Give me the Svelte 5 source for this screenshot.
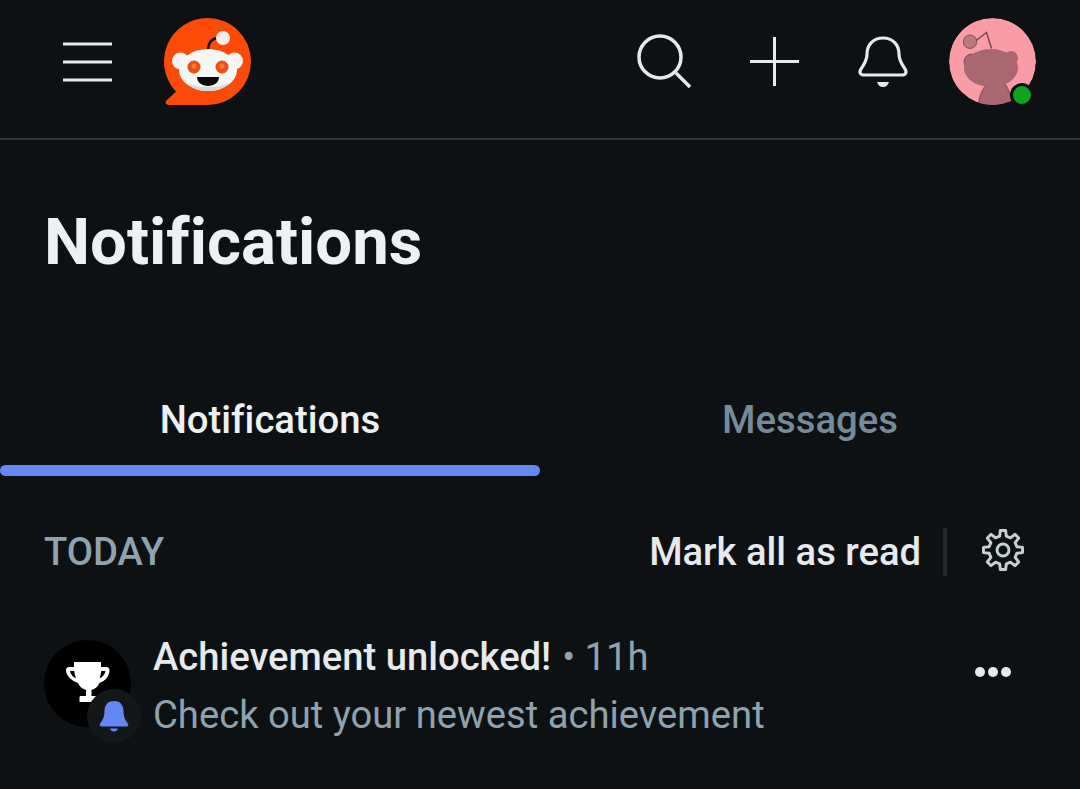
<script lang="ts">
  // 8-tooth gear outline, centred on 24,24
  function gearPath(teeth: number, outer: number, inner: number): string {
    const pts: string[] = [];
    const step = (Math.PI * 2) / teeth;
    for (let i = 0; i < teeth; i++) {
      const a = i * step - Math.PI / 2;
      const at = (r: number, d: number) =>
        `${(24 + r * Math.cos(a + d * step)).toFixed(2)} ${(24 + r * Math.sin(a + d * step)).toFixed(2)}`;
      pts.push(`${i === 0 ? 'M' : 'L'}${at(inner, -0.3)}`, `L${at(outer, -0.17)}`, `L${at(outer, 0.17)}`, `L${at(inner, 0.3)}`);
    }
    return pts.join(' ') + ' Z';
  }
  const gear = gearPath(8, 21.5, 15.5);
</script>

<div class="screen">
  <header class="topbar">
    <div class="left">
      <svg class="menu" viewBox="0 0 49 40" aria-label="Menu">
        <path d="M0 2h49M0 20h49M0 38h49" />
      </svg>
      <svg class="logo" viewBox="0 0 87 87" aria-label="Reddit">
        <path d="M43.5 0a43.500 43.500 0 0 1 0 87H5c-3 0-4.500-2.500-2.500-4.500l9.500-9A43.500 43.500 0 0 1 43.500 0z" fill="#fc4a08" />
        <path d="M44 32c.4-8 4-12 11-12" fill="none" stroke="#1c1414" stroke-width="2.400" />
        <circle cx="59" cy="20" r="7" fill="#f6ece8" />
        <circle cx="16.500" cy="43" r="8.500" fill="#f5f3f1" />
        <circle cx="70.500" cy="43" r="8.500" fill="#f5f3f1" />
        <ellipse cx="44" cy="52" rx="29" ry="21" fill="#f7f7f6" />
        <path d="M21 64c6 6 13 9 23 9s17-3 23-9c-5 3-13 5-23 5s-18-2-23-5z" fill="#cfdade" />
        <circle cx="30" cy="49" r="6.500" fill="#ea4e12" />
        <circle cx="58" cy="49" r="6.500" fill="#ea4e12" />
        <circle cx="30" cy="48" r="2.600" fill="#f07a42" />
        <circle cx="58" cy="48" r="2.600" fill="#f07a42" />
        <path d="M33 59h22c0 5.500-5 9-11 9s-11-3.500-11-9z" fill="#0c0b0c" />
      </svg>
    </div>
    <div class="right">
      <svg class="search" viewBox="0 0 53 52" aria-label="Search">
        <circle cx="22" cy="22" r="21" />
        <path d="M38 38l14 14" />
      </svg>
      <svg class="plus" viewBox="0 0 49 49" aria-label="Create">
        <path d="M24.500 0v49M0 24.500h49" />
      </svg>
      <svg class="bell" viewBox="0 0 50 52" aria-label="Inbox">
        <path d="M25 2C15 2 9 9 9 18c0 7-3 10-6 15-2 3-1 6 3 6h38c4 0 5-3 3-6-3-5-6-8-6-15 0-9-6-16-16-16z" />
        <path class="clap" d="M19 46h12c-1 3-3 5-6 5s-5-2-6-5z" />
      </svg>
      <div class="me">
        <svg class="avatar" viewBox="0 0 87 87" aria-label="Profile">
          <defs>
            <clipPath id="avatar-clip"><circle cx="43.500" cy="43.500" r="43.500" /></clipPath>
          </defs>
          <g clip-path="url(#avatar-clip)">
            <circle cx="43.500" cy="43.500" r="43.500" fill="#f99ca6" />
            <path d="M29 88c1-9 4-17 9-22h18c4 5 6 13 8 22z" fill="#a9676f" stroke="#7e4a53" stroke-width="1" />
            <path d="M26.500 23l11-8.500 5 16" fill="none" stroke="#7e4a53" stroke-width="1.500" />
            <circle cx="21" cy="23.700" r="6.700" fill="#bd7880" stroke="#7e4a53" stroke-width="1" />
            <circle cx="62" cy="40" r="7" fill="#a9676f" />
            <circle cx="23" cy="44" r="8" fill="#a9676f" stroke="#7e4a53" stroke-width="1" />
            <ellipse cx="42" cy="50" rx="27" ry="19" fill="#a9676f" />
          </g>
        </svg>
        <span class="online"></span>
      </div>
    </div>
  </header>

  <h1>Notifications</h1>

  <nav class="tabs">
    <div class="tab active">Notifications</div>
    <div class="tab">Messages</div>
  </nav>

  <section class="today">
    <span class="label">TODAY</span>
    <div class="actions">
      <span class="mark">Mark all as read</span>
      <span class="sep"></span>
      <svg class="gear" viewBox="0 0 48 48" aria-label="Settings">
        <path d={gear} />
        <circle cx="24" cy="24" r="6.500" />
      </svg>
    </div>
  </section>

  <article class="item">
    <div class="badge-wrap">
      <div class="trophy-disc">
        <svg class="trophy" viewBox="0 0 44 41" aria-label="Trophy">
          <path d="M8 0h27v5h5c2 0 3.500 1 3.500 3 0 6-4 11-10 13-2 4-4.500 6-8 7v6h5c1 0 1.500.5 1.500 1.500V40H13.500v-4.500c0-1 .5-1.500 1.500-1.500h5v-6c-3.500-1-6-3-8-7C6 19 0 14 0 8c0-2 1.500-3 3.500-3H8zM4 9c.5 3 2.500 6 6 7.500-.8-2-1.500-5-1.700-7.500zM39.500 9h-4.300c-.2 2.500-.9 5.500-1.700 7.500 3.500-1.500 5.500-4.500 6-7.500z" fill-rule="evenodd" />
        </svg>
      </div>
      <div class="bell-badge">
        <svg viewBox="0 0 30 32" aria-hidden="true">
          <path d="M15 1C8 1 5.500 6 5.500 11c0 6-2 9-4 12-1.500 2-1 3.500 1.500 3.500h24c2.500 0 3-1.500 1.500-3.500-2-3-4-6-4-12 0-5-2.500-10-9.500-10z" />
          <path d="M11 28.500h8c-.5 1.800-2 3-4 3s-3.500-1.200-4-3z" />
        </svg>
      </div>
    </div>
    <div class="copy">
      <div class="headline"><strong>Achievement unlocked!</strong><span class="meta">• 11h</span></div>
      <div class="sub">Check out your newest achievement</div>
    </div>
    <div class="more" aria-label="More">
      <span></span><span></span><span></span>
    </div>
  </article>
</div>

<style>
  :global(body) {
    background: #0e1113;
  }

  .screen {
    width: 1080px;
    height: 789px;
    overflow: hidden;
    background: #0e1113;
    color: #f2f4f5;
    font-family: Roboto, "Liberation Sans", sans-serif;
    font-variant-ligatures: none;
  }

  .topbar {
    display: flex;
    align-items: center;
    justify-content: space-between;
    box-sizing: border-box;
    height: 140px;
    padding: 0 44px 15px 63px;
    border-bottom: 2px solid #33373a;
  }

  .left,
  .right {
    display: flex;
    align-items: center;
  }

  .menu {
    width: 49px;
    height: 40px;
    margin-right: 52px;
  }

  .menu path,
  .plus path {
    fill: none;
    stroke: #e6eaec;
    stroke-width: 3;
  }

  .logo,
  .avatar {
    display: block;
    width: 87px;
    height: 87px;
  }

  .search {
    width: 53px;
    height: 52px;
    margin: -1px 59px 0 0;
    overflow: visible;
  }

  .search circle,
  .search path {
    fill: none;
    stroke: #e6eaec;
    stroke-width: 3.500;
  }

  .plus {
    width: 49px;
    height: 49px;
    margin-right: 59px;
  }

  .bell {
    width: 50px;
    height: 52px;
    margin-right: 41px;
  }

  .bell path {
    fill: none;
    stroke: #e6eaec;
    stroke-width: 3.200;
  }

  .bell path.clap {
    fill: #e6eaec;
    stroke: none;
  }

  .me {
    position: relative;
  }

  .online {
    position: absolute;
    right: 2px;
    bottom: -2px;
    box-sizing: border-box;
    width: 24px;
    height: 24px;
    border: 3px solid #0e1113;
    border-radius: 50%;
    background: #0ea51d;
  }

  h1 {
    margin: 0;
    padding: 67px 0 0 44px;
    font-size: 65.300px;
    line-height: 70px;
    font-weight: 700;
    color: #eef1f3;
  }

  .tabs {
    display: grid;
    grid-template-columns: 1fr 1fr;
    margin-top: 117px;
  }

  .tab {
    display: flex;
    flex-direction: column;
    justify-content: space-between;
    height: 82px;
    text-align: center;
    font-size: 38.300px;
    line-height: 52px;
    font-weight: 500;
    color: #768b99;
  }

  .tab.active {
    color: #eef1f3;
  }

  .tab.active::after {
    content: "";
    display: block;
    height: 11px;
    border-radius: 6px;
    background: #6388f2;
  }

  .today {
    display: flex;
    align-items: center;
    justify-content: space-between;
    height: 48px;
    margin-top: 52px;
    padding: 0 55px 0 44px;
  }

  .label {
    font-size: 38.200px;
    font-weight: 500;
    color: #8ea3af;
  }

  .actions {
    display: flex;
    align-items: center;
  }

  .mark {
    font-size: 38.200px;
    font-weight: 500;
    color: #e6eaed;
  }

  .sep {
    width: 4px;
    height: 48px;
    margin: 0 34px 0 22px;
    background: #25282b;
  }

  .gear {
    width: 44px;
    height: 44px;
    margin-bottom: 4px;
  }

  .gear path,
  .gear circle {
    fill: none;
    stroke: #c6d0d5;
    stroke-width: 3.200;
    stroke-linejoin: round;
  }

  .item {
    display: flex;
    margin-top: 64px;
    padding: 0 69px 0 44px;
  }

  .badge-wrap {
    position: relative;
    flex: none;
    width: 87px;
    height: 87px;
    margin-right: 22px;
  }

  .trophy-disc {
    display: flex;
    align-items: center;
    justify-content: center;
    width: 87px;
    height: 87px;
    border-radius: 50%;
    background: #000;
  }

  .trophy {
    width: 44px;
    height: 41px;
    fill: #fff;
    margin-bottom: 3px;
  }

  .bell-badge {
    position: absolute;
    left: 43px;
    top: 49px;
    display: flex;
    align-items: center;
    justify-content: center;
    width: 54px;
    height: 54px;
    border-radius: 50%;
    background: #13171a;
  }

  .bell-badge svg {
    width: 30px;
    height: 32px;
    fill: #6388f2;
  }

  .copy {
    flex: 1;
    margin-top: -8px;
  }

  .headline {
    font-size: 38.200px;
    line-height: 50px;
  }

  .headline strong {
    font-weight: 500;
    color: #e6eaed;
  }

  .meta {
    margin-left: 11px;
    color: #8ea3af;
    font-weight: 400;
  }

  .sub {
    margin-top: 8px;
    font-size: 38.200px;
    line-height: 50px;
    color: #8ea3af;
  }

  .more {
    display: flex;
    gap: 3px;
    padding-top: 27px;
  }

  .more span {
    width: 10px;
    height: 10px;
    border-radius: 50%;
    background: #e6eaec;
  }
</style>
